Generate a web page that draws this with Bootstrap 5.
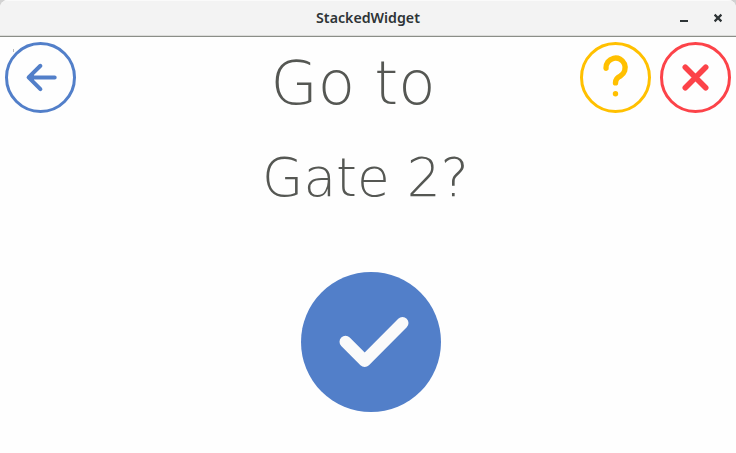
<!DOCTYPE html>
<html lang="en">
<head>
<meta charset="utf-8">
<title>StackedWidget</title>
<link href="https://cdn.jsdelivr.net/npm/bootstrap@5.3.0/dist/css/bootstrap.min.css" rel="stylesheet">
<style>
  body { background: #d2d2d2; }
  .window { background: #fefefe; border-radius: 8px 8px 0 0; }
  .titlebar { height: 37px; background: #f3f3f3; border-bottom: 1px solid #8b8e88; box-shadow: inset 0 -1px #dcdcda, inset 0 1px #fafafa; color: #2e3436; }
  .window-title { font: 600 14.2px/36px "Noto Sans", "Open Sans", sans-serif; }
  .window-controls { width: 100px; }
  .screen { padding: 5px; }
  .round-btn { width: 71px; height: 71px; }
  .side-start { width: 121px; }
  .side-end { width: 151px; }
  .prompt { font-family: "DejaVu Sans Light", "DejaVu Sans", sans-serif; font-weight: 200; color: #555753; white-space: pre; }
  .prompt-top { font-size: 61px; line-height: 71px; margin-top: 5px; }
  .prompt-dest { font-size: 53.3px; line-height: 64px; margin-top: 28px; margin-right: 5px; }
  .confirm { width: 140px; height: 140px; margin-top: 62px; margin-left: 6px; }
</style>
</head>
<body>
<div class="window vh-100 overflow-hidden d-flex flex-column">
  <header class="titlebar d-flex flex-shrink-0 justify-content-between">
    <div class="window-controls"></div>
    <div class="window-title">StackedWidget</div>
    <div class="window-controls d-flex justify-content-end">
      <svg width="64" height="36" viewBox="672 0 64 36" aria-label="Minimize and close">
        <path d="M680 20h8v2h-8z" fill="#2e3436"/>
        <path d="M714.6 14.6l6.8 6.8M721.4 14.6l-6.8 6.8" stroke="#2e3436" stroke-width="2.2"/>
      </svg>
    </div>
  </header>
  <main class="screen flex-grow-1 d-flex flex-column align-items-center">
    <div class="d-flex w-100 justify-content-between align-items-start">
      <div class="side-start">
        <button class="btn p-0 border-0 d-block round-btn" aria-label="Back">
          <svg class="d-block" width="71" height="71" fill="none" stroke="#527fc9">
            <circle cx="35.5" cy="35.5" r="34" stroke-width="3"/>
            <path d="M49.7 35.4H24M35.4 23.8L23.6 35.4l11.8 11.8" stroke-width="4" stroke-linecap="round" stroke-linejoin="round"/>
            <path d="M24 35.4l5-4v8z" fill="#527fc9" stroke="none"/>
            <path d="M8.5 7v3" stroke="#bbb" stroke-width="1"/>
          </svg>
        </button>
      </div>
      <div class="prompt prompt-top">Go to</div>
      <div class="side-end d-flex justify-content-between">
        <button class="btn p-0 border-0 round-btn" aria-label="Help">
          <svg class="d-block" width="71" height="71" fill="none" stroke="#ffc000">
            <circle cx="35.5" cy="35.5" r="34" stroke-width="3"/>
            <path d="M26 26.2A9.6 9.6 0 1 1 40.5 33.9Q35.5 36 35.5 40.9" stroke-width="5.4" stroke-linecap="round"/>
            <circle cx="35.5" cy="51.7" r="2.7" fill="#ffc000" stroke="none"/>
          </svg>
        </button>
        <button class="btn p-0 border-0 round-btn" aria-label="Cancel">
          <svg class="d-block" width="71" height="71" fill="none" stroke="#fc4349">
            <circle cx="35.5" cy="35.5" r="34" stroke-width="3"/>
            <path d="M25.3 25.3l20.4 20.4M45.7 25.3L25.3 45.7" stroke-width="5.6" stroke-linecap="round"/>
          </svg>
        </button>
      </div>
    </div>
    <div class="prompt prompt-dest">Gate 2?</div>
    <button class="btn p-0 border-0 confirm" aria-label="Confirm">
      <svg class="d-block" width="140" height="140" fill="none">
        <circle cx="70" cy="70" r="70" fill="#527fc9"/>
        <path d="M44.5 69.7L63.7 89L101.5 51" stroke="#fafafa" stroke-width="12" stroke-linecap="round" stroke-linejoin="round"/>
      </svg>
    </button>
  </main>
</div>
<script src="https://cdn.jsdelivr.net/npm/bootstrap@5.3.0/dist/js/bootstrap.bundle.min.js"></script>
</body>
</html>
